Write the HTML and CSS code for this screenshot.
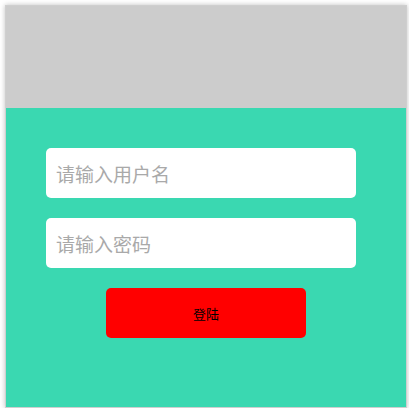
FILE: index.html
```html
<!DOCTYPE html>
<html lang="zh">
<head>
<meta charset="utf-8">
<link rel="stylesheet" href="styles.css">
</head>
<body>
<div class="frame">
  <div class="header"></div>
  <div class="main">
    <input class="field" type="text" placeholder="请输入用户名">
    <input class="field" type="password" placeholder="请输入密码">
    <button class="login">登陆</button>
  </div>
</div>
</body>
</html>
```
FILE: styles.css
```css
html, body {
  margin: 0;
  padding: 0;
  background: #fff;
}
body {
  padding: 5px 0 0 5px;
  font-family: "Noto Sans CJK SC", "Noto Sans", sans-serif;
}
.frame {
  width: 400px;
  border: 1px solid #cfcfcf;
  box-shadow: 0 0 5px rgba(0, 0, 0, 0.25);
  display: flex;
  flex-direction: column;
}
.header {
  height: 102px;
  background: #cccccc;
}
.main {
  height: 299px;
  background: #3ad8b1;
  padding: 40px 0 0 40px;
  box-sizing: border-box;
  display: flex;
  flex-direction: column;
  align-items: flex-start;
  gap: 20px;
}
.field {
  width: 310px;
  height: 50px;
  box-sizing: border-box;
  border: none;
  border-radius: 5px;
  background: #fff;
  padding: 0 10px;
  font-family: "Noto Sans CJK SC", sans-serif;
  font-size: 19px;
  color: #333;
  outline: none;
}
.field::placeholder {
  color: #a9a9a9;
}
.login {
  align-self: flex-start;
  margin: 0 0 0 60px;
  width: 200px;
  height: 50px;
  border: none;
  border-radius: 5px;
  background: #ff0000;
  color: #000;
  font-family: "Noto Sans CJK SC", sans-serif;
  font-size: 13px;
  padding: 0;
}
```
